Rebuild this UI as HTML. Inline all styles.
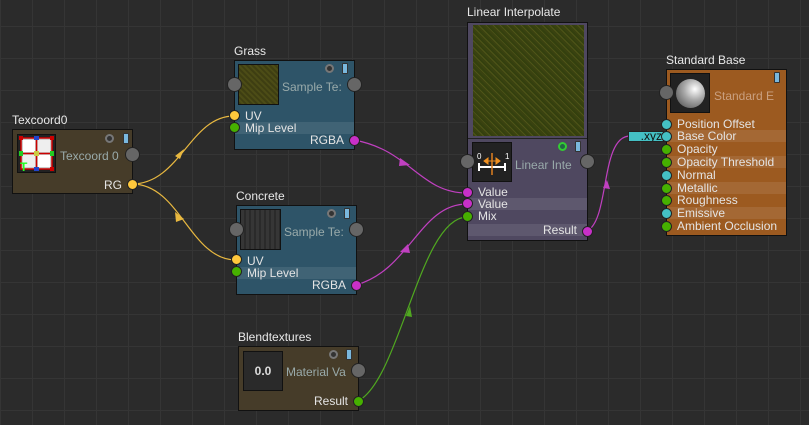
<!DOCTYPE html>
<html><head><meta charset="utf-8"><style>
*{margin:0;padding:0;box-sizing:border-box}
body{width:809px;height:425px;overflow:hidden;background-color:#2b2b2b;
background-image:linear-gradient(#353535 1px,transparent 1px),linear-gradient(90deg,#353535 1px,transparent 1px);
background-size:32px 32px;background-position:0 26px,0 0;
font-family:"Liberation Sans","DejaVu Sans",sans-serif;font-size:12px;color:#ddd;position:relative}
.t{position:absolute;color:#e8e8e8;font-size:12px;white-space:nowrap}
.n{position:absolute;border:1px solid #111}
.row{position:absolute;left:0;right:0;height:12px;line-height:12px;color:#e4e4e4;font-size:12px}
.hl{background:rgba(255,255,255,0.09)}
.p{position:absolute;width:11px;height:11px;border-radius:50%;border:1px solid #222}
.g{background:#46b000}.y{background:#ffc83c}.m{background:#c830c8}.c{background:#44c0c4}.gr{background:#666;width:15px;height:15px}
.lbl{position:absolute;color:#9aa;font-size:12px;white-space:nowrap;overflow:hidden}
.th{position:absolute;border:1px solid #111}
.ic{position:absolute;width:9px;height:9px;border-radius:50%;border:2px solid #777;background:#333}
.ic2{position:absolute;width:6px;height:11px;background:#7ab8dd;border:1px solid #333;border-radius:1px}
</style></head><body>
<svg width="809" height="425" style="position:absolute;left:0;top:0" fill="none">
<g stroke="#e8b840" stroke-width="1.2">
<path d="M132 184 C180 184 190 116 234 116"/>
<path d="M132 184 C180 184 190 260 236 260"/>
</g>
<g stroke="#c040c0" stroke-width="1.2">
<path d="M354 140 C410 150 420 193 467 193"/>
<path d="M356 285 C410 270 420 204 467 204"/>
<path d="M587 231 C610 220 600 136 630 136"/>
</g>
<path d="M358 401 C400 380 420 217 467 217" stroke="#50a820" stroke-width="1.2"/>
<polygon points="175,156 184,149 180,159" fill="#e8b840"/>
<polygon points="175,212 184,219 176,222" fill="#e8b840"/>
<polygon points="400,158 410,165 399,166" fill="#c040c0"/>
<polygon points="400,252 408,244 410,253" fill="#c040c0"/>
<polygon points="406,316 410,306 412,317" fill="#50a820"/>
<polygon points="603,188 607,180 610,189" fill="#c040c0"/>
</svg>

<!-- Texcoord0 -->
<div class="t" style="left:12px;top:113px">Texcoord0</div>
<div class="n" style="left:12px;top:129px;width:121px;height:65px;background:#463c29">
<div class="th" style="left:4px;top:4px;width:39px;height:39px;background:#222;border-color:#111">
<svg width="37" height="37" viewBox="0 0 37 37"><rect x="3" y="3" width="31" height="31" fill="#ccc"/><rect x="5" y="5" width="12" height="12" fill="#fff"/><rect x="20" y="20" width="12" height="12" fill="#fff"/><rect x="20" y="5" width="12" height="12" fill="#eee"/><rect x="5" y="20" width="12" height="12" fill="#eee"/><path d="M3 3H34V34H3Z M18.5 3V34 M3 18.5H34" fill="none" stroke="#c00" stroke-width="1.5"/><rect x="1" y="1" width="4" height="4" fill="#c00"/><rect x="32" y="1" width="4" height="4" fill="#c00"/><rect x="32" y="32" width="4" height="4" fill="#c00"/><rect x="16" y="1" width="5" height="4" fill="#24c"/><rect x="16" y="32" width="5" height="4" fill="#24c"/><rect x="1" y="16" width="4" height="5" fill="#2c2"/><rect x="32" y="16" width="4" height="5" fill="#2c2"/><rect x="16" y="16" width="5" height="5" fill="#cc4"/><text x="2" y="36" fill="#2f2" font-size="12" font-weight="bold" font-family="Liberation Sans">T</text></svg></div>
<div class="ic" style="left:92px;top:4px"></div><div class="ic2" style="left:110px;top:3px"></div>
<div class="lbl" style="left:47px;top:19px">Texcoord 0</div>
<div class="row" style="top:49px;text-align:right;padding-right:10px">RG</div>
</div>
<div class="p gr" style="left:125px;top:147px"></div>
<div class="p y" style="left:127px;top:179px"></div>

<!-- Grass -->
<div class="t" style="left:234px;top:44px">Grass</div>
<div class="n" style="left:234px;top:60px;width:121px;height:90px;background:#2e5468">
<div class="th" style="left:3px;top:3px;width:41px;height:41px;background:repeating-linear-gradient(45deg,#3e3e12 0 2px,#4c4c16 2px 4px);"></div>
<div class="ic" style="left:90px;top:3px"></div><div class="ic2" style="left:107px;top:2px"></div>
<div class="lbl" style="left:47px;top:19px;width:60px">Sample Te:</div>
<div class="row" style="top:49px;padding-left:10px">UV</div>
<div class="row hl" style="top:61px;padding-left:10px">Mip Level</div>
<div class="row" style="top:73px;text-align:right;padding-right:10px">RGBA</div>
</div>
<div class="p gr" style="left:227px;top:77px"></div><div class="p gr" style="left:347px;top:77px"></div>
<div class="p y" style="left:229px;top:110px"></div><div class="p g" style="left:229px;top:122px"></div><div class="p m" style="left:349px;top:135px"></div>

<!-- Concrete -->
<div class="t" style="left:236px;top:189px">Concrete</div>
<div class="n" style="left:236px;top:205px;width:121px;height:90px;background:#2e5468">
<div class="th" style="left:3px;top:3px;width:41px;height:41px;background:repeating-linear-gradient(90deg,#363636 0 3px,#2a2a2a 3px 5px);"></div>
<div class="ic" style="left:90px;top:3px"></div><div class="ic2" style="left:107px;top:2px"></div>
<div class="lbl" style="left:47px;top:19px;width:60px">Sample Te:</div>
<div class="row" style="top:49px;padding-left:10px">UV</div>
<div class="row hl" style="top:61px;padding-left:10px">Mip Level</div>
<div class="row" style="top:73px;text-align:right;padding-right:10px">RGBA</div>
</div>
<div class="p gr" style="left:229px;top:222px"></div><div class="p gr" style="left:349px;top:222px"></div>
<div class="p y" style="left:231px;top:254px"></div><div class="p g" style="left:231px;top:266px"></div><div class="p m" style="left:351px;top:280px"></div>

<!-- Linear Interpolate -->
<div class="t" style="left:467px;top:5px">Linear Interpolate</div>
<div class="n" style="left:467px;top:22px;width:121px;height:219px;background:#4f4860">
<div style="position:absolute;left:5px;top:2px;width:111px;height:111px;background:repeating-linear-gradient(45deg,#3a4210 0 2px,#4e5418 2px 3px,#34400e 3px 5px);"></div>
<div style="position:absolute;left:0;right:0;top:115px;height:1px;background:#222"></div>
<div class="th" style="left:4px;top:119px;width:40px;height:40px;background:#222">
<svg width="38" height="38"><path d="M6 24H32 M6 20V28 M32 20V28" stroke="#fff" stroke-width="2"/><path d="M19 10V32" stroke="#e08020" stroke-width="1.5"/><path d="M11 18H27 M11 18L15 15V21Z M27 18L23 15V21Z" stroke="#f09020" fill="#f09020"/><text x="4" y="16" fill="#fff" font-size="8" font-family="Liberation Sans">0</text><text x="32" y="16" fill="#fff" font-size="8" font-family="Liberation Sans">1</text></svg></div>
<div class="ic" style="left:90px;top:119px;border-color:#3c3;background:#264"></div><div class="ic2" style="left:107px;top:118px"></div>
<div class="lbl" style="left:47px;top:135px;width:60px">Linear Inte</div>
<div class="row" style="top:163px;padding-left:10px">Value</div>
<div class="row hl" style="top:175px;padding-left:10px">Value</div>
<div class="row" style="top:187px;padding-left:10px">Mix</div>
<div class="row hl" style="top:201px;text-align:right;padding-right:10px">Result</div>
</div>
<div class="p gr" style="left:460px;top:154px"></div><div class="p gr" style="left:580px;top:154px"></div>
<div class="p m" style="left:462px;top:187px"></div><div class="p m" style="left:462px;top:198px"></div><div class="p g" style="left:462px;top:211px"></div><div class="p m" style="left:582px;top:226px"></div>

<!-- Standard Base -->
<div class="t" style="left:666px;top:53px">Standard Base</div>
<div class="n" style="left:666px;top:69px;width:121px;height:167px;background:#9c5a20">
<div class="th" style="left:3px;top:3px;width:40px;height:40px;background:#222"><div style="position:absolute;left:5px;top:5px;width:29px;height:29px;border-radius:50%;background:radial-gradient(circle at 65% 35%,#fff,#aaa 40%,#444)"></div></div>
<div class="ic2" style="left:107px;top:2px"></div>
<div class="lbl" style="left:47px;top:19px;width:67px;color:#c9a080">Standard E</div>
<div class="row" style="top:48px;padding-left:10px">Position Offset</div>
<div class="row hl" style="top:60px;padding-left:10px">Base Color</div>
<div class="row" style="top:73px;padding-left:10px">Opacity</div>
<div class="row hl" style="top:86px;padding-left:10px">Opacity Threshold</div>
<div class="row" style="top:99px;padding-left:10px">Normal</div>
<div class="row hl" style="top:112px;padding-left:10px">Metallic</div>
<div class="row" style="top:124px;padding-left:10px">Roughness</div>
<div class="row hl" style="top:137px;padding-left:10px">Emissive</div>
<div class="row" style="top:150px;padding-left:10px">Ambient Occlusion</div>
</div>
<div class="p gr" style="left:659px;top:85px"></div>
<div style="position:absolute;left:628px;top:131px;width:36px;height:11px;background:#44c0c4;border:1px solid #222;color:#111;font-size:12px;line-height:9px;text-align:right;padding-right:1px;overflow:hidden">.xyz</div>
<div class="p c" style="left:661px;top:119px"></div>
<div class="p c" style="left:661px;top:131px"></div>
<div class="p g" style="left:661px;top:144px"></div>
<div class="p g" style="left:661px;top:157px"></div>
<div class="p c" style="left:661px;top:170px"></div>
<div class="p g" style="left:661px;top:183px"></div>
<div class="p g" style="left:661px;top:195px"></div>
<div class="p c" style="left:661px;top:208px"></div>
<div class="p g" style="left:661px;top:221px"></div>

<!-- Blendtextures -->
<div class="t" style="left:238px;top:330px">Blendtextures</div>
<div class="n" style="left:238px;top:346px;width:121px;height:65px;background:#463c29">
<div class="th" style="left:4px;top:4px;width:40px;height:40px;background:#2a2a2a;color:#ddd;font-weight:bold;font-size:12px;line-height:38px;text-align:center">0.0</div>
<div class="ic" style="left:90px;top:3px"></div><div class="ic2" style="left:107px;top:2px"></div>
<div class="lbl" style="left:47px;top:18px;width:62px">Material Va</div>
<div class="row" style="top:48px;text-align:right;padding-right:10px">Result</div>
</div>
<div class="p gr" style="left:351px;top:363px"></div>
<div class="p g" style="left:353px;top:396px"></div>
</body></html>
